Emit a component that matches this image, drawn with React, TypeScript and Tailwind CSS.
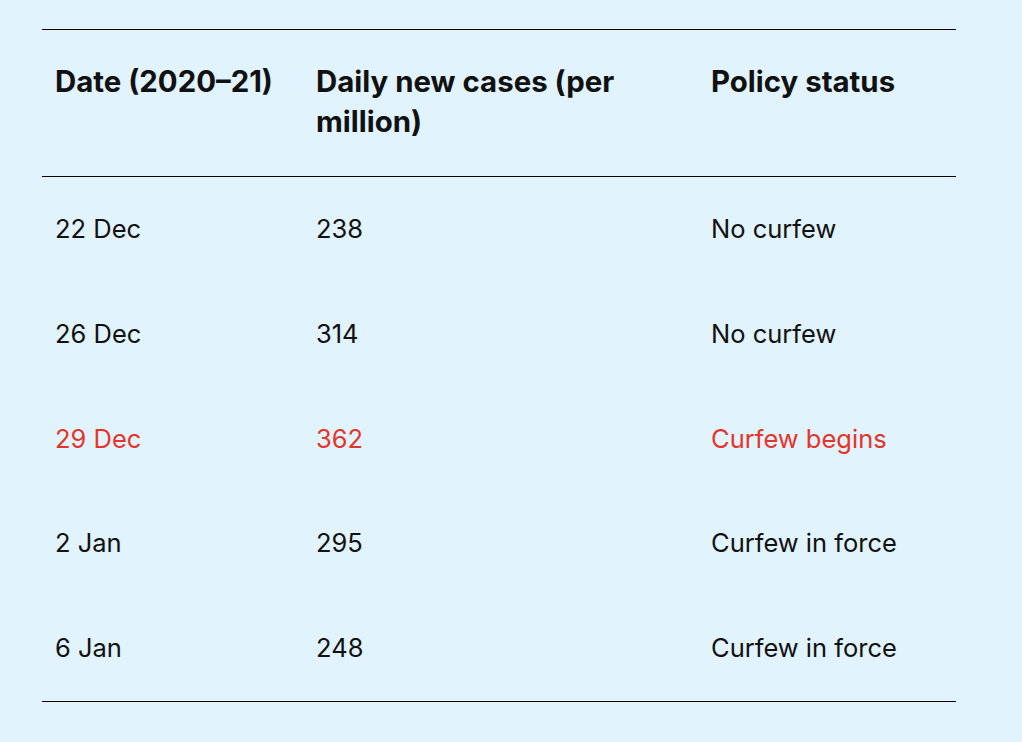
const rows = [
  { date: '22 Dec', cases: '238', status: 'No curfew' },
  { date: '26 Dec', cases: '314', status: 'No curfew' },
  { date: '29 Dec', cases: '362', status: 'Curfew begins', highlight: true },
  { date: '2 Jan', cases: '295', status: 'Curfew in force' },
  { date: '6 Jan', cases: '248', status: 'Curfew in force' },
];

export default function App() {
  return (
    <div className="min-h-screen bg-[#e1f3fc] pl-[42px] pt-[29px] font-['Inter',sans-serif] text-[#111]">
      <table className="w-[914px] table-fixed border-collapse border-y border-black text-left">
        <thead>
          <tr className="border-b border-black">
            <th className="w-[261px] px-[13px] pt-[32px] pb-[34px] align-top text-[29.4px] leading-[40px] font-bold">
              Date (2020–21)
            </th>
            <th className="w-[395px] px-[13px] pt-[32px] pb-[34px] align-top text-[29.4px] leading-[40px] font-bold">
              Daily new cases (per million)
            </th>
            <th className="px-[13px] pt-[32px] pb-[34px] align-top text-[29.4px] leading-[40px] font-bold">
              Policy status
            </th>
          </tr>
        </thead>
        <tbody>
          {rows.map((r) => (
            <tr key={r.date} className={r.highlight ? 'text-[#e5352b]' : ''}>
              <td className="px-[13px] py-[34px] text-[25.5px] leading-[36.8px]">{r.date}</td>
              <td className="px-[13px] py-[34px] text-[25.5px] leading-[36.8px]">{r.cases}</td>
              <td className="px-[13px] py-[34px] text-[25.5px] leading-[36.8px]">{r.status}</td>
            </tr>
          ))}
        </tbody>
      </table>
    </div>
  );
}
